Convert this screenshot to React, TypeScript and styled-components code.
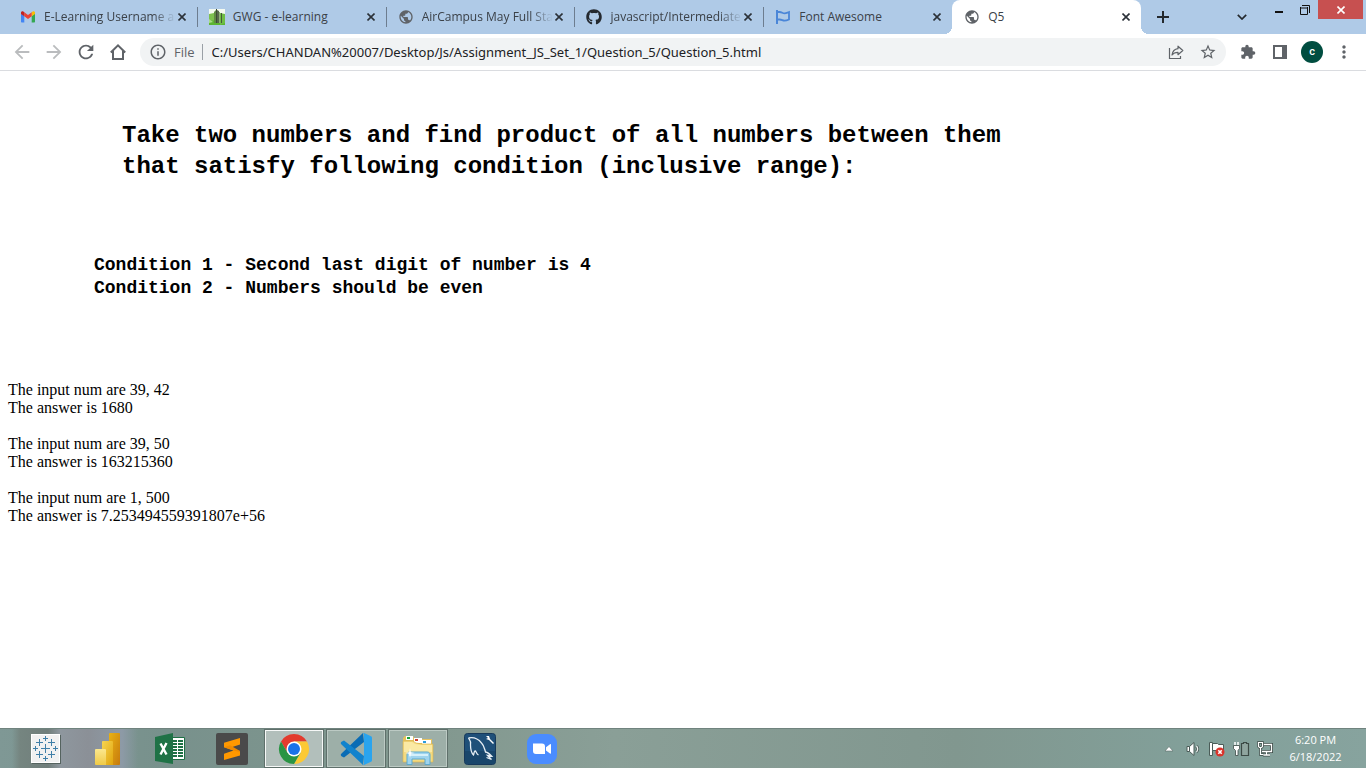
import React from 'react';
import styled, { createGlobalStyle, css } from 'styled-components';
import {
  MdPublic,
  MdArrowBack,
  MdArrowForward,
  MdRefresh,
  MdInfoOutline,
  MdStarBorder,
  MdExtension,
  MdMoreVert,
} from 'react-icons/md';
import { FaGithub } from 'react-icons/fa';

const ui = "'Open Sans', 'Noto Sans', sans-serif";

const GlobalStyle = createGlobalStyle`
  *, *::before, *::after { box-sizing: border-box; }
  body { margin: 0; background: #fff; color: #000; }
  button { border: 0; padding: 0; background: none; font: inherit; color: inherit; }
  svg { display: block; flex: none; }
`;

const Screen = styled.div`
  display: flex;
  flex-direction: column;
  min-height: 100vh;
`;

/* ---------- tab strip ---------- */

const TabStrip = styled.header`
  display: flex;
  height: 34px;
  padding-left: 8px;
  background: #afcae7;
  font: 12px/16px ${ui};
  color: #3b4148;
`;

const TabList = styled.nav`
  display: flex;
  flex: 0 1 1133px;
  min-width: 0;
`;

const Tab = styled.div<{ $active?: boolean; $divided?: boolean }>`
  position: relative;
  display: flex;
  align-items: center;
  flex: 1 1 0;
  min-width: 0;
  padding: 0 9px 0 12px;

  ${({ $divided }) =>
    $divided &&
    css`
      &::after {
        content: '';
        position: absolute;
        right: -1px;
        top: 7px;
        width: 1px;
        height: 20px;
        background: #6d7d8f;
      }
    `}

  ${({ $active }) =>
    $active &&
    css`
      background: #fff;
      border-radius: 8px 8px 0 0;

      &::before,
      &::after {
        content: '';
        position: absolute;
        bottom: 0;
        width: 8px;
        height: 8px;
      }
      &::before {
        right: 100%;
        background: radial-gradient(circle at 0 0, transparent 8px, #fff 8px);
      }
      &::after {
        left: 100%;
        background: radial-gradient(circle at 100% 0, transparent 8px, #fff 8px);
      }
    `}
`;

const TabTitle = styled.button<{ $fade?: boolean }>`
  flex: 1;
  min-width: 0;
  height: 100%;
  margin: 0 -4px 0 8px;
  overflow: hidden;
  text-align: left;
  white-space: nowrap;
  ${({ $fade }) => $fade && 'mask-image: linear-gradient(to right, #000 80%, transparent 97%);'}
`;

const TabClose = styled.button`
  display: grid;
  place-items: center;
  width: 12px;
  height: 16px;
  color: #2b3138;
`;

const StripButton = styled.button`
  display: grid;
  place-items: center;
  width: 28px;
  color: #24292e;
`;

const NewTab = styled(StripButton)`
  margin-left: 8px;
`;

const WindowButtons = styled.div`
  display: flex;
  margin-left: auto;
  padding-right: 3px;
`;

const WindowButton = styled.button<{ $close?: boolean }>`
  display: grid;
  place-items: center;
  width: ${({ $close }) => ($close ? 45 : 26)}px;
  height: 19px;
  color: ${({ $close }) => ($close ? '#fff' : '#111')};
  background: ${({ $close }) => ($close ? '#c75050' : 'none')};
`;

const TabSearch = styled(StripButton)`
  margin-right: 10px;
`;

/* ---------- toolbar ---------- */

const Toolbar = styled.div`
  display: flex;
  align-items: center;
  height: 37px;
  padding: 0 6px;
  border-bottom: 1px solid #dadce0;
  background: #fff;
  color: #5f6368;
  font: 13px/20px ${ui};
`;

const ToolButton = styled.button<{ $disabled?: boolean }>`
  display: grid;
  place-items: center;
  flex: none;
  width: 32px;
  height: 28px;
  color: ${({ $disabled }) => ($disabled ? '#babcbe' : '#5f6368')};
`;

const AddressBar = styled.div`
  display: flex;
  align-items: center;
  flex: 1;
  min-width: 0;
  height: 28px;
  margin: 0 6px;
  padding: 0 2px 0 9px;
  border-radius: 14px;
  background: #f1f3f4;
`;

const Scheme = styled.label`
  margin-left: 7px;
  padding-right: 7px;
  border-right: 1px solid #9aa0a6;
  line-height: 16px;
`;

const AddressInput = styled.input`
  flex: 1;
  min-width: 0;
  border: 0;
  padding: 0 0 0 9px;
  outline: 0;
  background: none;
  color: #202124;
  font: 13px/20px 'Noto Sans', sans-serif;
`;

const Avatar = styled.span`
  display: grid;
  place-items: center;
  width: 22px;
  height: 22px;
  border-radius: 50%;
  background: #004d40;
  color: #fff;
  font: 500 11px/22px Roboto, sans-serif;
`;

/* ---------- page ---------- */

const Page = styled.main`
  flex: 1;
  padding: 49px 8px;
  font: 16px/18px 'Liberation Serif', serif;
`;

const Title = styled.h1`
  margin: 0 0 72px;
  padding-left: 114px;
  font: bold 24px/31px 'Liberation Mono', monospace;
`;

const Conditions = styled.h2`
  margin: 0 0 81px;
  padding-left: 86px;
  font: bold 18px/23px 'Liberation Mono', monospace;
`;

const Result = styled.p`
  margin: 0 0 18px;
`;

/* ---------- taskbar ---------- */

const Taskbar = styled.footer`
  display: flex;
  align-items: stretch;
  height: 40px;
  padding-left: 16px;
  border-top: 1px solid #70837e;
  background:
    linear-gradient(to right, rgba(115, 130, 126, 0) 12px, #758580 20px, #707e7b 48px, #8e979e 60px, #8b9097 88px, #8d9aa6 122px, rgba(124, 149, 143, 0) 138px),
    linear-gradient(to right, #7f9895, #78918c 12%, #82988f 32%, #8a9f97 45%, #81978f 70%, #82a09a 88%, #87a39e);
`;

const Apps = styled.nav`
  display: flex;
  gap: 2px;
`;

const AppButton = styled.button<{ $state?: 'open' | 'focused' }>`
  display: grid;
  place-items: center;
  width: 60px;
  ${({ $state }) =>
    $state &&
    css`
      border: 1px solid #5f706b;
      background: ${$state === 'focused' ? '#b2bfbb' : '#9dafa8'};
      box-shadow: inset 0 0 0 1px ${$state === 'focused' ? '#f6f8f7' : '#bccac4'};
    `}
`;

const Tray = styled.div`
  display: flex;
  margin-left: auto;
`;

const TrayButton = styled.button`
  display: grid;
  place-items: center;
  width: 24px;
`;

const Clock = styled.button`
  width: 89px;
  padding: 0 12px 2px 0;
  color: #fff;
  font: 11px/17px ${ui};
  text-align: center;

  time {
    display: block;
  }
`;

/* ---------- icons ---------- */

const Cross = () => (
  <svg width="8" height="8" viewBox="0 0 8 8" stroke="currentColor" strokeWidth="1.600" fill="none">
    <path d="M.5.5l7 7M7.5.5l-7 7" />
  </svg>
);

const GmailIcon = () => (
  <svg width="16" height="16" viewBox="0 0 16 16">
    <path d="M1 5v7.500c0 .6.4 1 1 1h2.300V7L1 4.500z" fill="#4285f4" />
    <path d="M15 5v7.500c0 .6-.4 1-1 1h-2.300V7L15 4.500z" fill="#34a853" />
    <path d="M11.700 3.500V7.300L15 4.900V3.800c0-1.300-1.400-1.900-2.300-1.200z" fill="#fbbc04" />
    <path d="M4.300 7.300V3.300L8 6l3.700-2.700v4L8 10z" fill="#ea4335" />
    <path d="M1 3.800v1.100l3.300 2.400v-4l-1-.7C2.400 1.900 1 2.500 1 3.800z" fill="#c5221f" />
  </svg>
);

const BuildingIcon = () => (
  <svg width="16" height="16" viewBox="0 0 16 16">
    <path d="M0 0h16v16H0z" fill="#f4faf0" />
    <path d="M0 5l5-1v12H0z" fill="#7cc04e" />
    <path d="M0 12l16-2v6H0z" fill="#5cb531" />
    <path d="M11 4l5 1v9l-5 2z" fill="#6fbd45" />
    <path d="M5 3l2-2v13H5z" fill="#5f8a42" />
    <path d="M7 0h1v14H7z" fill="#3c4a35" />
    <path d="M8 1l2 1v12H8z" fill="#55684a" />
    <path d="M10 3h1v11h-1z" fill="#8fae78" />
    <path d="M12 4h1v10h-1z" fill="#455a38" />
    <path d="M0 10l4 3-4 1z" fill="#a9dc86" />
  </svg>
);

const FlagIcon = () => (
  <svg width="16" height="16" viewBox="0 0 16 16" fill="none" stroke="#4a86d8" strokeWidth="2">
    <path d="M2 1v14" />
    <path d="M2 3h2.500c2.500 0 3 1.300 5 1.300 1.800 0 2.700-.7 4.500-1.300v7.500c-1.500.7-2.700 1.200-4.500 1.200-2 0-2.500-1.200-5-1.200H2" strokeWidth="1.800" />
  </svg>
);

const HomeIcon = () => (
  <svg width="18" height="18" viewBox="0 0 18 18" fill="none" stroke="currentColor" strokeWidth="2">
    <path d="M1.800 9.500L9 2.300l7.200 7.200M4 8v8h10V8" />
  </svg>
);

const ShareIcon = () => (
  <svg width="16" height="16" viewBox="0 0 16 16" fill="none" stroke="currentColor" strokeWidth="1.200">
    <path d="M1.500 4v10.500h11V12" />
    <path d="M10 2.200L14.800 6.500 10 10.700V8.300c-2.600 0-4.600.7-6 2.700.5-3.300 2.500-5.800 6-6.300z" strokeLinejoin="round" />
  </svg>
);

const SidePanelIcon = () => (
  <svg width="14" height="14" viewBox="0 0 14 14">
    <path d="M0 0h14v14H0zM2 2v10h7V2z" fill="currentColor" fillRule="evenodd" />
  </svg>
);

const TableauIcon = () => (
  <svg width="32" height="32" viewBox="0 0 32 32">
    <path d="M2 2h29v29H2z" fill="#55635f" />
    <path d="M1 1h29v29H1z" fill="#fff" />
    <path d="M2 2h27v27H2z" fill="#f1f1f1" />
    <g stroke="#3f7fa8" strokeWidth="1">
      <path d="M11 15.500h9M15.500 11v9" />
      <path d="M6 9.500h7M9.500 6v7M18 9.500h7M21.500 6v7M6 21.500h7M9.500 18v7M18 21.500h7M21.500 18v7" />
      <path d="M13 5.500h5M15.500 3v5M13 25.500h5M15.500 23v5M3 15.500h5M5.500 13v5M23 15.500h5M25.500 13v5" />
    </g>
  </svg>
);

const PowerBiIcon = () => (
  <svg width="32" height="32" viewBox="0 0 32 32">
    <defs>
      <linearGradient id="pbA" x2="1" y2="1"><stop stopColor="#e9b214" /><stop offset="1" stopColor="#c67a0d" /></linearGradient>
      <linearGradient id="pbB" x2="1" y2="1"><stop stopColor="#f7d551" /><stop offset="1" stopColor="#e0a40c" /></linearGradient>
      <linearGradient id="pbC" x2="0" y2="1"><stop stopColor="#fbe78e" /><stop offset="1" stopColor="#f0ca46" /></linearGradient>
    </defs>
    <rect x="17" y="0" width="11" height="32" rx="1" fill="url(#pbA)" />
    <path d="M10 9a1 1 0 011-1h9a1 1 0 011 1v23H10z" fill="url(#pbB)" />
    <path d="M3 17a1 1 0 011-1h9a1 1 0 011 1v15H4a1 1 0 01-1-1z" fill="url(#pbC)" />
  </svg>
);

const ExcelIcon = () => (
  <svg width="32" height="32" viewBox="0 0 32 32">
    <path d="M17 4.500h13.500v22H17z" fill="#fff" stroke="#1d7044" />
    <path d="M19 7h4v2h-4zM24 7h5v2h-5zM19 10h4v2h-4zM24 10h5v2h-5zM19 13h4v2h-4zM24 13h5v2h-5zM19 16h4v2h-4zM24 16h5v2h-5zM19 19h4v2h-4zM24 19h5v2h-5zM19 22h4v2h-4zM24 22h5v2h-5z" fill="#1d7044" />
    <path d="M1 4l18-4v31L1 28z" fill="#1f7246" />
    <path d="M6.500 10.500l6 11M12.500 10l-6 11.500" stroke="#fff" strokeWidth="2.400" />
  </svg>
);

const SublimeIcon = () => (
  <svg width="32" height="32" viewBox="0 0 32 32">
    <rect width="32" height="32" rx="2" fill="#4a4a4a" />
    <path d="M24 5v6.500l-10 3.300 10 3.200v4.500L8 27v-6.300l9.500-3.200L8 14.300V9.800z" fill="#ff9800" />
    <path d="M8 14.300l6-2 10 5.700v1l-6.500-1.500z" fill="#ef8a00" />
  </svg>
);

const ChromeIcon = () => (
  <svg width="32" height="32" viewBox="0 0 32 32">
    <path d="M3 8.500A15 15 0 0129 8.500H16L9.500 19.700z" fill="#e33b2e" />
    <path d="M29 8.500A15 15 0 0116 31l6.500-11.200L16 8.500z" fill="#fcc934" />
    <path d="M3 8.500A15 15 0 0016 31l6.500-11.200H9.500z" fill="#2a9444" />
    <circle cx="16" cy="16" r="7.500" fill="#fff" />
    <circle cx="16" cy="16" r="6" fill="#1a73e8" />
  </svg>
);

const VsCodeIcon = () => (
  <svg width="32" height="32" viewBox="0 0 32 32">
    <path d="M23 0l1 9L4 24.500 1.500 23.200c-1-.8-1-1.800 0-2.600z" fill="#0a6cb5" />
    <path d="M23 32l1-9L4 7.500 1.500 8.800c-1 .8-1 1.800 0 2.600z" fill="#1283cd" />
    <path d="M24 0l7 3.300c.6.300 1 .8 1 1.500v22.400c0 .7-.4 1.200-1 1.500L24 32c-.7 0-1.300-.3-1.800-.8.700.6 1.800.1 1.800-.8V1.600c0-.9-1.100-1.400-1.800-.8.500-.5 1.100-.8 1.800-.8z" fill="#2aa4ee" />
  </svg>
);

const ExplorerIcon = () => (
  <svg width="32" height="32" viewBox="0 0 32 32">
    <path d="M1 5l2-2h8l2 3h17v4l1 18-2 1H2l-1-2z" fill="#e6c25e" />
    <path d="M4 3h7v4H4z" fill="#fff" />
    <path d="M5 4h3v2H5z" fill="#19a335" />
    <path d="M12 5h8v5h-8z" fill="#fff" />
    <path d="M13 6h3v2h-3z" fill="#d0412c" />
    <path d="M20 7h9v4h-9z" fill="#fff" />
    <path d="M21 8h3v2h-3z" fill="#2a9be0" />
    <path d="M1 8h10l3 2 6 1h11v18H1z" fill="#f4da80" stroke="#d8b14c" strokeWidth=".6" />
    <path d="M2 9h8l3 2 6 1h11v7H2z" fill="#fae9a4" />
    <path d="M5 31.500V22c0-2 1-3 3-3h17c2 0 3 1 3 3v9.500h-5V26H10v5.500z" fill="#9fd4ee" stroke="#5da9cd" />
    <path d="M7 21h19v2H7z" fill="#d5f0fb" />
    <path d="M8 15l.8 4.200L13 20l-4.200.8L8 25l-.8-4.200L3 20l4.200-.8z" fill="#fff" />
  </svg>
);

const WorkbenchIcon = () => (
  <svg width="32" height="32" viewBox="0 0 32 32">
    <rect x="0.500" y="0.500" width="31" height="31" rx="3" fill="#1f5079" stroke="#17395a" />
    <path d="M1 18h30v11l-2 2H3l-2-2z" fill="#153f63" opacity=".6" />
    <path d="M4.500 5c5-1 9 0 13 5 3 3 3 6 4 9 2 0 4 2 6 4l-4-.5 4 4-5-2M4.500 5c1 2 3 3 2 7 0 4 1 8 3 10 1-2 0-4 2-4 1 1 1 3 3 4" fill="none" stroke="#e6eef4" strokeWidth="1.300" />
    <path d="M22 3h3l1 3 4 4-1 1-4-4-3-1 2-1z" fill="#fff" />
  </svg>
);

const ZoomIcon = () => (
  <svg width="32" height="32" viewBox="0 0 32 32">
    <rect x="1" y="1" width="30" height="30" rx="9" fill="#4a8cff" />
    <path d="M7 10.500h9a3 3 0 013 3v7.500h-9a3 3 0 01-3-3zM20 14.200l4-3c.6-.4 1 0 1 .5v8.200c0 .6-.5 1-1 .5l-4-3z" fill="#fff" />
  </svg>
);

const SpeakerIcon = () => (
  <svg width="16" height="16" viewBox="0 0 16 16">
    <path d="M2 5.500h2.500L9 1.500v13l-4.500-4H2z" fill="#fff" stroke="#4b5c58" />
    <path d="M4.500 5.500v5" stroke="#4b5c58" />
    <path d="M11.500 5c1.300 1.700 1.300 4.300 0 6" fill="none" stroke="#4b5c58" strokeWidth="3" />
    <path d="M11.500 5c1.300 1.700 1.300 4.300 0 6" fill="none" stroke="#eef3f1" strokeWidth="1.300" />
  </svg>
);

const ActionFlagIcon = () => (
  <svg width="18" height="16" viewBox="0 0 18 16">
    <path d="M1.500 1.500h3v13h-3z" fill="#fff" stroke="#4b5c58" />
    <path d="M4.500 2.500h5l1 1h5v7h-5l-1-1h-5z" fill="#fff" stroke="#4b5c58" />
    <circle cx="12" cy="11" r="4.500" fill="#d9332b" />
    <path d="M10.300 9.300l3.400 3.400M13.700 9.300l-3.400 3.400" stroke="#fff" strokeWidth="1.600" />
  </svg>
);

const BatteryIcon = () => (
  <svg width="18" height="16" viewBox="0 0 18 16">
    <path d="M9.500 2.500h2v-1h3v1h2v12h-7z" fill="#8fa59f" stroke="#3c4a46" strokeWidth="1.200" />
    <path d="M1.500 4.500h6v3l-1.500 2v5H3.500v-5L1.500 7.500z" fill="#fff" stroke="#3c4a46" strokeWidth=".8" />
    <path d="M3 1v3M6 1v3" stroke="#fff" strokeWidth="1.500" />
  </svg>
);

const NetworkIcon = () => (
  <svg width="18" height="16" viewBox="0 0 18 16" fill="none">
    <path d="M7 3.500h8.500v7H6M10.500 11v3M7 14h7" stroke="#3c4a46" strokeWidth="3" />
    <path d="M7 3.500h8.500v7H6M10.500 11v3M7 14h7" stroke="#fff" strokeWidth="1.300" />
    <path d="M2.500 1.500h4v4l-1 1h-2l-1-1zM4.500 7v6.500h3" stroke="#3c4a46" strokeWidth="2.600" />
    <path d="M2.500 1.500h4v4l-1 1h-2l-1-1zM4.500 7v6.500h3" stroke="#fff" strokeWidth="1.200" />
  </svg>
);

/* ---------- content ---------- */

const tabs = [
  { title: 'E-Learning Username a', icon: <GmailIcon />, fade: true },
  { title: 'GWG - e-learning', icon: <BuildingIcon /> },
  { title: 'AirCampus May Full Sta', icon: <MdPublic size={16} color="#5f6368" />, fade: true },
  { title: 'javascript/Intermediate_', icon: <FaGithub size={16} color="#24292f" />, fade: true },
  { title: 'Font Awesome', icon: <FlagIcon /> },
  { title: 'Q5', icon: <MdPublic size={16} color="#5f6368" /> },
];

const apps: { name: string; icon: React.ReactNode; state?: 'open' | 'focused' }[] = [
  { name: 'Tableau', icon: <TableauIcon /> },
  { name: 'Power BI', icon: <PowerBiIcon /> },
  { name: 'Excel', icon: <ExcelIcon /> },
  { name: 'Sublime Text', icon: <SublimeIcon /> },
  { name: 'Google Chrome', icon: <ChromeIcon />, state: 'focused' },
  { name: 'Visual Studio Code', icon: <VsCodeIcon />, state: 'open' },
  { name: 'File Explorer', icon: <ExplorerIcon />, state: 'open' },
  { name: 'MySQL Workbench', icon: <WorkbenchIcon /> },
  { name: 'Zoom', icon: <ZoomIcon /> },
];

const results = [
  ['39, 42', '1680'],
  ['39, 50', '163215360'],
  ['1, 500', '7.253494559391807e+56'],
];

export default function App() {
  return (
    <Screen>
      <GlobalStyle />
      <TabStrip>
        <TabList>
          {tabs.map((tab, i) => (
            <Tab key={tab.title} $active={i === 5} $divided={i < 4}>
              {tab.icon}
              <TabTitle $fade={tab.fade}>{tab.title}</TabTitle>
              <TabClose aria-label={`Close ${tab.title}`}>
                <Cross />
              </TabClose>
            </Tab>
          ))}
        </TabList>
        <NewTab aria-label="New tab">
          <svg width="12" height="12" viewBox="0 0 12 12" stroke="currentColor" strokeWidth="2">
            <path d="M6 0v12M0 6h12" />
          </svg>
        </NewTab>
        <WindowButtons>
          <TabSearch aria-label="Search tabs">
            <svg width="10" height="6" viewBox="0 0 10 6" fill="none" stroke="currentColor" strokeWidth="1.700">
              <path d="M.8.800L5 5 9.200.800" />
            </svg>
          </TabSearch>
          <WindowButton aria-label="Minimize">
            <svg width="8" height="10" viewBox="0 0 8 10" fill="currentColor">
              <path d="M0 6h8v2H0z" />
            </svg>
          </WindowButton>
          <WindowButton aria-label="Restore">
            <svg width="10" height="10" viewBox="0 0 10 10" fill="none" stroke="currentColor">
              <path d="M.5 3h7M.5 2v7.500h7V2M2 .5h7.500V8" />
            </svg>
          </WindowButton>
          <WindowButton $close aria-label="Close window">
            <Cross />
          </WindowButton>
        </WindowButtons>
      </TabStrip>

      <Toolbar>
        <ToolButton $disabled aria-label="Back"><MdArrowBack size={22} /></ToolButton>
        <ToolButton $disabled aria-label="Forward"><MdArrowForward size={22} /></ToolButton>
        <ToolButton aria-label="Reload"><MdRefresh size={22} /></ToolButton>
        <ToolButton aria-label="Home"><HomeIcon /></ToolButton>
        <AddressBar>
          <MdInfoOutline size={18} />
          <Scheme htmlFor="address">File</Scheme>
          <AddressInput
            id="address"
            defaultValue="C:/Users/CHANDAN%20007/Desktop/Js/Assignment_JS_Set_1/Question_5/Question_5.html"
          />
          <ToolButton aria-label="Share"><ShareIcon /></ToolButton>
          <ToolButton aria-label="Bookmark"><MdStarBorder size={18} /></ToolButton>
        </AddressBar>
        <ToolButton aria-label="Extensions"><MdExtension size={16} /></ToolButton>
        <ToolButton aria-label="Side panel"><SidePanelIcon /></ToolButton>
        <ToolButton aria-label="Profile"><Avatar>c</Avatar></ToolButton>
        <ToolButton aria-label="Menu"><MdMoreVert size={20} /></ToolButton>
      </Toolbar>

      <Page>
        <Title>
          Take two numbers and find product of all numbers between them
          <br />
          that satisfy following condition (inclusive range):
        </Title>
        <Conditions>
          Condition 1 - Second last digit of number is 4
          <br />
          Condition 2 - Numbers should be even
        </Conditions>
        {results.map(([input, answer]) => (
          <Result key={input}>
            The input num are {input}
            <br />
            The answer is {answer}
          </Result>
        ))}
      </Page>

      <Taskbar>
        <Apps>
          {apps.map((app) => (
            <AppButton key={app.name} $state={app.state} aria-label={app.name}>
              {app.icon}
            </AppButton>
          ))}
        </Apps>
        <Tray>
          <TrayButton aria-label="Show hidden icons">
            <svg width="10" height="6" viewBox="0 0 10 6">
              <path d="M5 .5L9 5H1z" fill="#fff" stroke="#5b6c68" strokeWidth=".6" />
            </svg>
          </TrayButton>
          <TrayButton aria-label="Volume"><SpeakerIcon /></TrayButton>
          <TrayButton aria-label="Action center"><ActionFlagIcon /></TrayButton>
          <TrayButton aria-label="Battery"><BatteryIcon /></TrayButton>
          <TrayButton aria-label="Network"><NetworkIcon /></TrayButton>
          <Clock>
            <time>6:20 PM</time>
            <time>6/18/2022</time>
          </Clock>
        </Tray>
      </Taskbar>
    </Screen>
  );
}
